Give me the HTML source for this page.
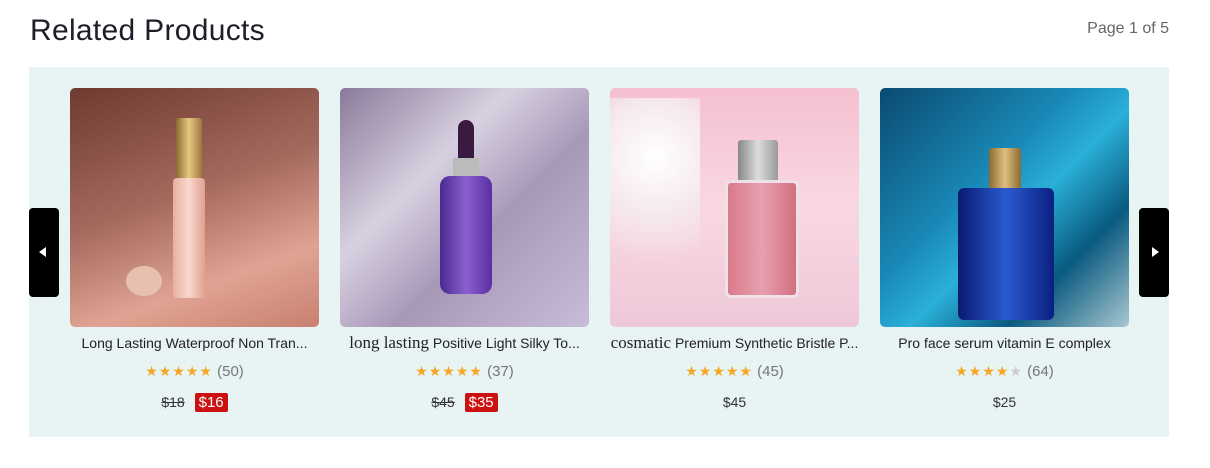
<!DOCTYPE html>
<html><head><meta charset="utf-8"><style>
body{margin:0;width:1210px;height:468px;background:#fff;font-family:"Liberation Sans",sans-serif;position:relative;overflow:hidden}
h2{position:absolute;left:30px;top:14px;margin:0;font-size:30px;font-weight:400;color:#1e1e28;letter-spacing:0.3px}
.pg{position:absolute;right:41px;top:20px;font-size:16px;color:#666}
.panel{position:absolute;left:29px;top:67px;width:1140px;height:370px;background:#e8f3f3}
.card{position:absolute;top:21px;width:249px}
.img{width:249px;height:239px;border-radius:5px;position:relative;overflow:hidden}
.t{margin-top:6px;height:20px;line-height:20px;font-size:14px;color:#222;white-space:nowrap;overflow:hidden;text-align:center}
.t .s{font-family:"Liberation Serif",serif;font-size:17px}
.r{text-align:center;margin-top:8px;height:20px;line-height:20px;font-size:15px;color:#777}
.st{color:#f5a623;letter-spacing:1px;font-size:14px}
.e{color:#ccc}
.p{text-align:center;margin-top:11px;font-size:14px;color:#333;height:20px;line-height:20px}
.p del{color:#333;margin-right:6px}
.p b{font-weight:400;background:#c11;color:#fff;padding:1px 4px;border-radius:2px;font-size:15px}
.ar{position:absolute;top:141px;width:30px;height:89px;background:#000;border-radius:4px}
</style></head><body>
<h2>Related Products</h2><div class="pg">Page 1 of 5</div>
<div class="panel">
<div class="ar" style="left:0"><span style="position:absolute;left:10px;top:39px;border:5px solid transparent;border-right:7px solid #fff;border-left:0"></span></div>
<div class="ar" style="right:0"><span style="position:absolute;left:13px;top:39px;border:5px solid transparent;border-left:7px solid #fff;border-right:0"></span></div>

<div class="card" style="left:41px">
<div class="img" style="background:linear-gradient(160deg,#6e3a30 0%,#a56a5e 45%,#e0a393 75%,#c88070 100%)">
<div style="position:absolute;left:106px;top:30px;width:26px;height:60px;background:linear-gradient(90deg,#8a6a30,#e8c880,#9a7840);border-radius:3px"></div>
<div style="position:absolute;left:103px;top:90px;width:32px;height:120px;background:linear-gradient(90deg,#e9b0a0,#f8d8cc,#e0a090);border-radius:4px"></div>
<div style="position:absolute;left:56px;top:178px;width:36px;height:30px;background:#e8c0b0;border-radius:50%"></div>
</div>
<div class="t">Long Lasting Waterproof Non Tran...</div>
<div class="r"><span class="st">★★★★★</span> (50)</div>
<div class="p"><del>$18</del> <b>$16</b></div></div>

<div class="card" style="left:311px">
<div class="img" style="background:linear-gradient(135deg,#8a7a9a 0%,#d8d0e0 35%,#a898b8 60%,#c8bcd8 100%)">
<div style="position:absolute;left:118px;top:32px;width:16px;height:40px;background:#3a1a40;border-radius:8px 8px 2px 2px"></div>
<div style="position:absolute;left:113px;top:70px;width:26px;height:20px;background:#bbb"></div>
<div style="position:absolute;left:100px;top:88px;width:52px;height:118px;background:linear-gradient(90deg,#4a2a90,#8a60d0,#5a30a0);border-radius:10px"></div>
</div>
<div class="t"><span class="s">long lasting</span> Positive Light Silky To...</div>
<div class="r"><span class="st">★★★★★</span> (37)</div>
<div class="p"><del>$45</del> <b>$35</b></div></div>

<div class="card" style="left:581px">
<div class="img" style="background:linear-gradient(180deg,#f5c0d0 0%,#f9d8e2 50%,#eec8d8 100%)">
<div style="position:absolute;left:0;top:10px;width:90px;height:200px;background:radial-gradient(circle at 50% 30%,#fff 0,#f5e8ec 40%,transparent 70%)"></div>
<div style="position:absolute;left:128px;top:52px;width:40px;height:42px;background:linear-gradient(90deg,#888,#ddd,#999);border-radius:3px"></div>
<div style="position:absolute;left:115px;top:92px;width:68px;height:112px;background:linear-gradient(90deg,#d87a8a,#e8a0b0,#d07080);border-radius:6px;border:3px solid #f0e0e8"></div>
</div>
<div class="t"><span class="s">cosmatic</span> Premium Synthetic Bristle P...</div>
<div class="r"><span class="st">★★★★★</span> (45)</div>
<div class="p">$45</div></div>

<div class="card" style="left:851px">
<div class="img" style="background:linear-gradient(135deg,#0a4a70 0%,#1a8ab8 40%,#2ab0d8 55%,#0a5a80 75%,#a8c8d0 100%)">
<div style="position:absolute;left:109px;top:60px;width:32px;height:42px;background:linear-gradient(90deg,#8a6a30,#e0c080,#8a6a30);border-radius:3px"></div>
<div style="position:absolute;left:78px;top:100px;width:96px;height:132px;background:linear-gradient(90deg,#0a1a70,#2a5ad0,#0a2080);border-radius:6px"></div>
</div>
<div class="t">Pro face serum vitamin E complex</div>
<div class="r"><span class="st">★★★★<span class="e">★</span></span> (64)</div>
<div class="p">$25</div></div>
</div>
</body></html>
